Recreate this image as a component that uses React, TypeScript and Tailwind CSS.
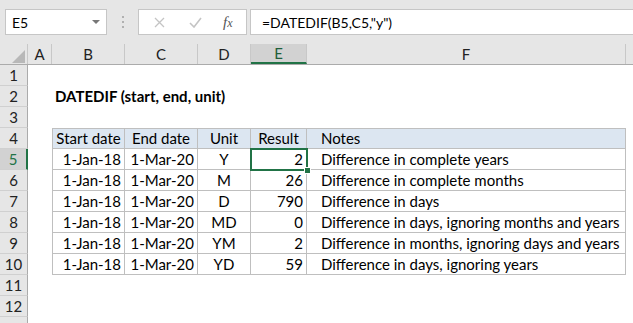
import React from 'react';

const cols = [
  { key: 'A', w: 'w-[24px]' },
  { key: 'B', w: 'w-[73px]' },
  { key: 'C', w: 'w-[73px]' },
  { key: 'D', w: 'w-[53px]' },
  { key: 'E', w: 'w-[56px]' },
  { key: 'F', w: 'w-[319px]' },
];

const rows = [
  { start: '1-Jan-18', end: '1-Mar-20', unit: 'Y', result: '2', note: 'Difference in complete years' },
  { start: '1-Jan-18', end: '1-Mar-20', unit: 'M', result: '26', note: 'Difference in complete months' },
  { start: '1-Jan-18', end: '1-Mar-20', unit: 'D', result: '790', note: 'Difference in days' },
  { start: '1-Jan-18', end: '1-Mar-20', unit: 'MD', result: '0', note: 'Difference in days, ignoring months and years' },
  { start: '1-Jan-18', end: '1-Mar-20', unit: 'YM', result: '2', note: 'Difference in months, ignoring days and years' },
  { start: '1-Jan-18', end: '1-Mar-20', unit: 'YD', result: '59', note: 'Difference in days, ignoring years' },
];

const RowHeader: React.FC<{ n?: number; selected?: boolean }> = ({ n, selected }) => (
  <div
    className={
      selected
        ? 'w-[28px] h-full flex items-center justify-center bg-[#d2d2d2] text-[#217346] border-r-2 border-r-[#217346] border-b border-b-[#d0d0d0]'
        : 'w-[28px] h-full flex items-center justify-center bg-[#e6e6e6] text-[#222] border-r border-r-[#ababab] border-b border-b-[#d0d0d0]'
    }
  >
    {n}
  </div>
);

export default function App() {
  return (
    <div className="relative w-[633px] h-[323px] overflow-hidden bg-white text-[15px] text-black font-['Lato',sans-serif]">
      {/* Formula bar */}
      <div className="h-[44px] bg-[#e6e6e6] flex items-start pt-[9px]">
        <div className="ml-[5px] w-[102px] h-[26px] bg-white border border-[#c6c6c6] flex items-center justify-between pl-[6px] pr-[6px] text-[14px]">
          <span>E5</span>
          <span className="w-0 h-0 border-l-[4px] border-r-[4px] border-t-[4px] border-l-transparent border-r-transparent border-t-[#777]" />
        </div>
        <div className="w-[31px] h-[26px] flex flex-col items-center justify-center gap-[3px]">
          <span className="w-[2px] h-[2px] bg-[#b0b0b0]" />
          <span className="w-[2px] h-[2px] bg-[#b0b0b0]" />
          <span className="w-[2px] h-[2px] bg-[#b0b0b0]" />
        </div>
        <div className="w-[109px] h-[26px] bg-white border border-[#c6c6c6] flex items-center">
          <svg className="ml-[15px]" width="11" height="11" viewBox="0 0 11 11">
            <path d="M1 1 L10 10 M10 1 L1 10" stroke="#c4c4c4" strokeWidth="1.3" />
          </svg>
          <svg className="ml-[24px]" width="13" height="11" viewBox="0 0 13 11">
            <path d="M1 6 L5 10 L12 1" stroke="#c4c4c4" strokeWidth="1.6" fill="none" />
          </svg>
          <span className="ml-[21px] text-[15px] italic text-[#555] font-['Liberation_Serif',serif] leading-none">
            f<span className="text-[12px]">x</span>
          </span>
        </div>
        <div className="ml-[3px] flex-1 h-[26px] bg-white border border-[#c6c6c6] border-r-0 flex items-center pl-[11px] text-[14px]">
          =DATEDIF(B5,C5,"y")
        </div>
      </div>

      {/* Column headers */}
      <div className="h-[21px] flex bg-[#e6e6e6] border-b border-[#ababab]">
        <div className="w-[28px] h-full flex items-end justify-end pr-[2px] pb-[1px] border-r border-[#c8c8c8]">
          <span className="w-0 h-0 border-l-[13px] border-b-[13px] border-l-transparent border-b-[#b8b8b8]" />
        </div>
        {cols.map((c) =>
          c.key === 'E' ? (
            <div
              key={c.key}
              className={`${c.w} h-full flex items-center justify-center bg-[#d2d2d2] text-[#1e5e3a] border-r border-r-[#c8c8c8] border-b-2 border-b-[#217346]`}
            >
              {c.key}
            </div>
          ) : (
            <div key={c.key} className={`${c.w} h-full flex items-center justify-center text-[#222] border-r border-[#c8c8c8]`}>
              {c.key}
            </div>
          )
        )}
        <div className="flex-1" />
      </div>

      {/* Row 1 */}
      <div className="h-[21px] flex">
        <RowHeader n={1} />
      </div>
      {/* Row 2 */}
      <div className="h-[21px] flex">
        <RowHeader n={2} />
        <div className="w-[24px]" />
        <div className="pl-[3px] flex items-center font-bold whitespace-nowrap">DATEDIF (start, end, unit)</div>
      </div>
      {/* Row 3 */}
      <div className="h-[21px] flex">
        <RowHeader n={3} />
      </div>
      {/* Row 4 - table header */}
      <div className="h-[21px] flex">
        <RowHeader n={4} />
        <div className="w-[24px]" />
        <div className="w-[73px] h-full flex items-center justify-center bg-[#dce6f1] border border-[#bfbfbf]">Start date</div>
        <div className="w-[73px] h-full flex items-center justify-center bg-[#dce6f1] border-t border-r border-b border-[#bfbfbf]">End date</div>
        <div className="w-[53px] h-full flex items-center justify-center bg-[#dce6f1] border-t border-r border-b border-[#bfbfbf]">Unit</div>
        <div className="w-[56px] h-full flex items-center justify-center bg-[#dce6f1] border-t border-r border-b border-[#bfbfbf]">Result</div>
        <div className="w-[319px] h-full flex items-center pl-[14px] bg-[#dce6f1] border-t border-r border-b border-[#bfbfbf]">Notes</div>
      </div>
      {rows.map((r, i) => (
        <div key={i} className="h-[21px] flex">
          <RowHeader n={i + 5} selected={i === 0} />
          <div className="w-[24px]" />
          <div className="w-[73px] h-full flex items-center justify-end pr-[3px] border-l border-r border-b border-[#bfbfbf]">{r.start}</div>
          <div className="w-[73px] h-full flex items-center justify-end pr-[3px] border-r border-b border-[#bfbfbf]">{r.end}</div>
          <div className="w-[53px] h-full flex items-center justify-center border-r border-b border-[#bfbfbf]">{r.unit}</div>
          <div className="w-[56px] h-full flex items-center justify-end pr-[3px] border-r border-b border-[#bfbfbf]">{r.result}</div>
          <div className="w-[319px] h-full flex items-center pl-[14px] border-r border-b border-[#bfbfbf] whitespace-nowrap">{r.note}</div>
        </div>
      ))}
      <div className="h-[21px] flex">
        <RowHeader n={11} />
      </div>
      <div className="h-[21px] flex">
        <RowHeader n={12} />
      </div>
      <div className="h-[21px] flex">
        <RowHeader />
      </div>

      {/* Selection E5 */}
      <div className="absolute left-[250px] top-[148px] w-[58px] h-[23px] border-2 border-[#217346]" />
      <div className="absolute left-[304px] top-[167px] w-[7px] h-[7px] bg-[#217346] border border-white" />
    </div>
  );
}
